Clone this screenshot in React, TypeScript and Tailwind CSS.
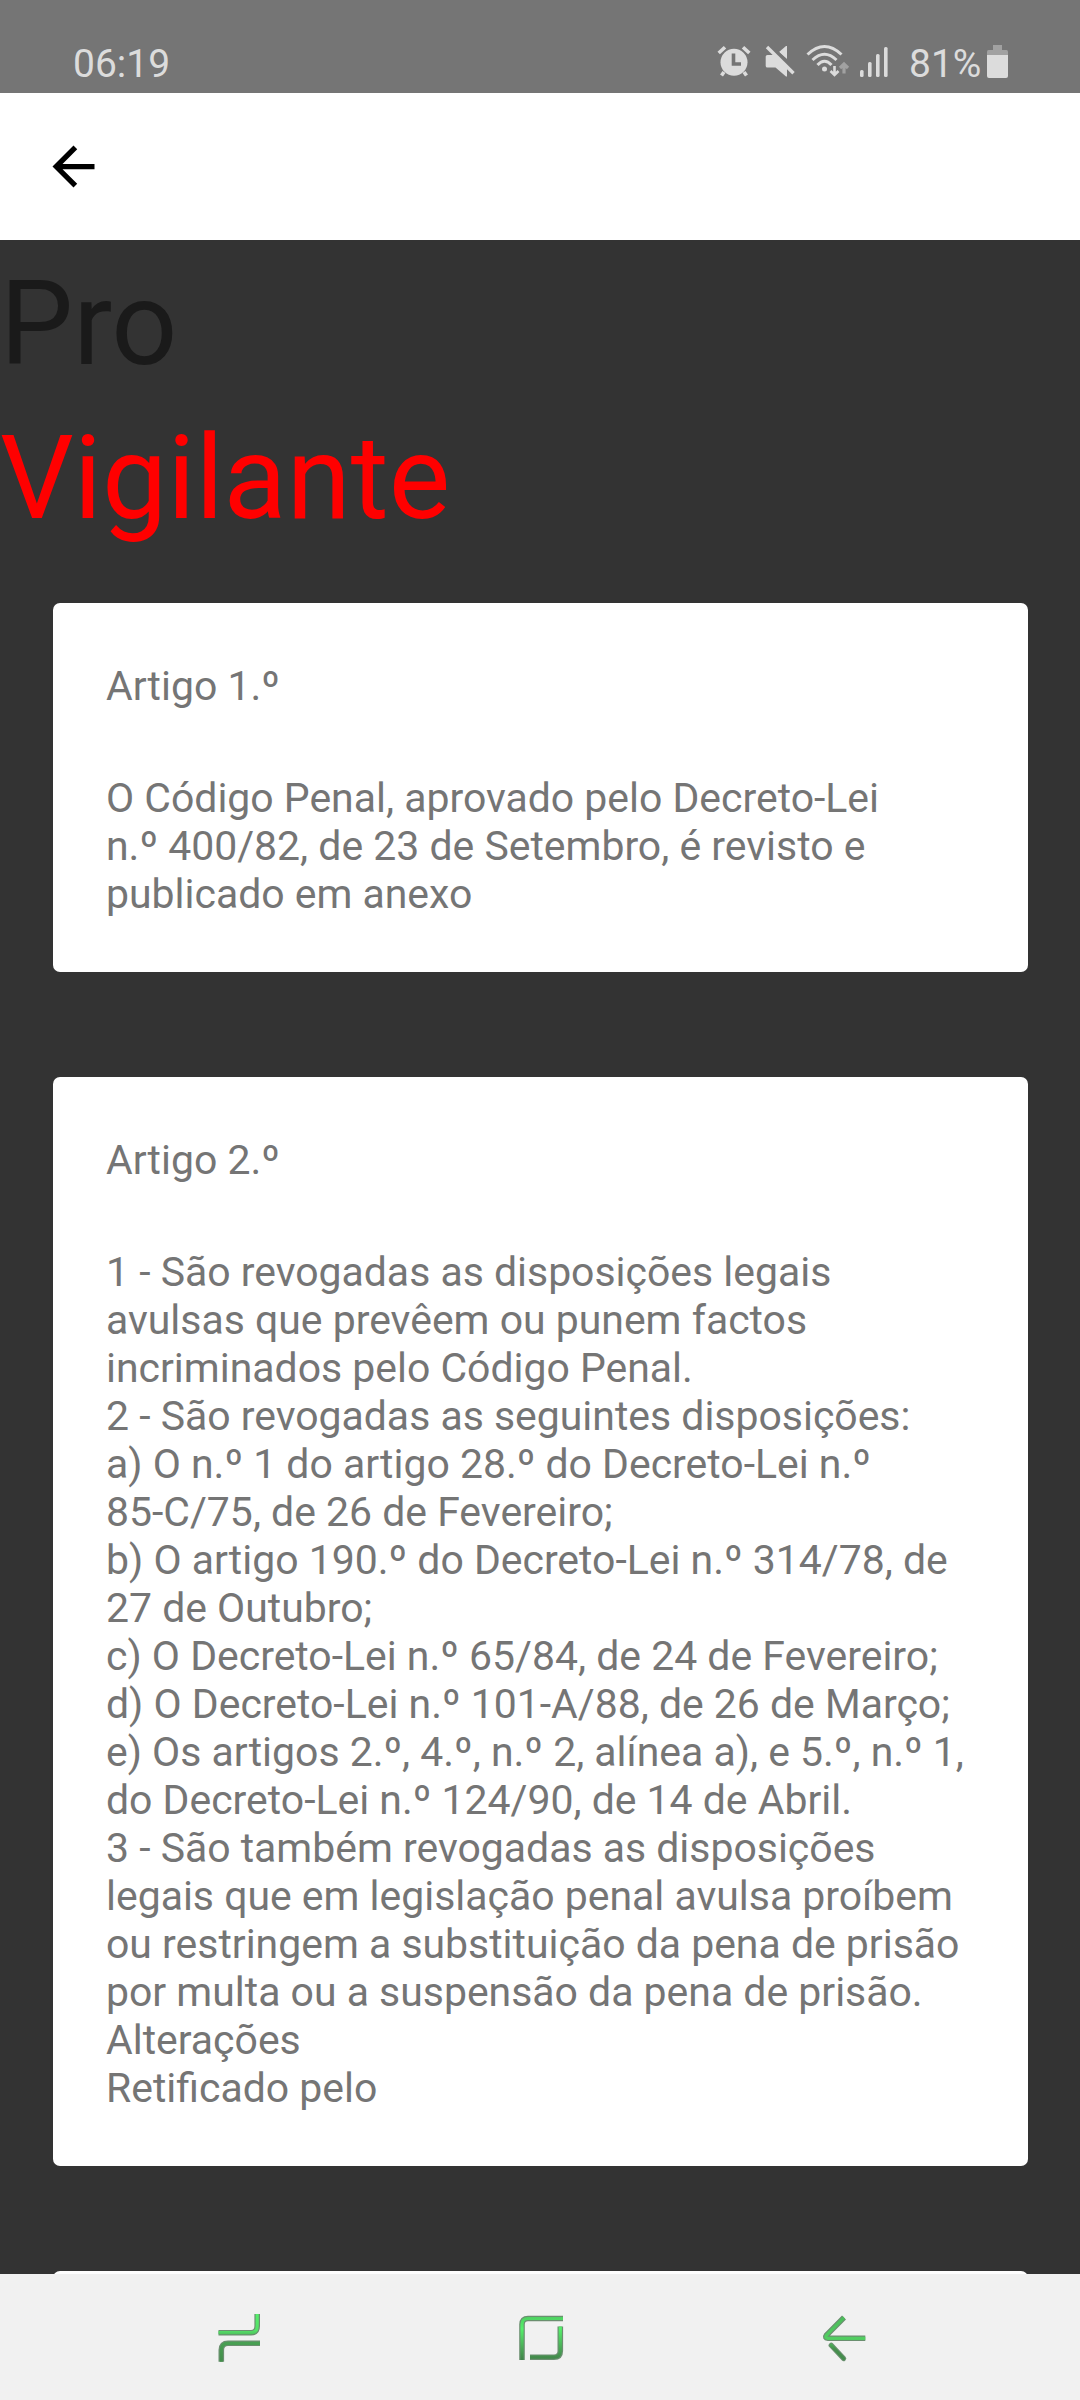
import React from "react";

const ARTICLES = [
  {
    title: "Artigo 1.º",
    lines: [
      "O Código Penal, aprovado pelo Decreto-Lei",
      "n.º 400/82, de 23 de Setembro, é revisto e",
      "publicado em anexo",
    ],
  },
  {
    title: "Artigo 2.º",
    lines: [
      "1 - São revogadas as disposições legais",
      "avulsas que prevêem ou punem factos",
      "incriminados pelo Código Penal.",
      "2 - São revogadas as seguintes disposições:",
      "a) O n.º 1 do artigo 28.º do Decreto-Lei n.º",
      "85-C/75, de 26 de Fevereiro;",
      "b) O artigo 190.º do Decreto-Lei n.º 314/78, de",
      "27 de Outubro;",
      "c) O Decreto-Lei n.º 65/84, de 24 de Fevereiro;",
      "d) O Decreto-Lei n.º 101-A/88, de 26 de Março;",
      "e) Os artigos 2.º, 4.º, n.º 2, alínea a), e 5.º, n.º 1,",
      "do Decreto-Lei n.º 124/90, de 14 de Abril.",
      "3 - São também revogadas as disposições",
      "legais que em legislação penal avulsa proíbem",
      "ou restringem a substituição da pena de prisão",
      "por multa ou a suspensão da pena de prisão.",
      "Alterações",
      "Retificado pelo",
    ],
  },
];

function StatusIcons() {
  return (
    <svg width="174" height="36" viewBox="0 0 174 36" fill="#dcdcdc">
      {/* alarm */}
      <g stroke="#dcdcdc" fill="none" strokeWidth="3.6">
        <path d="M1.7 9 L8 3.2 M26 3.2 L32.300 9" />
        <path d="M7 28 L4.500 31.500 M27 28 L29.500 31.500" />
      </g>
      <circle cx="17" cy="18.200" r="13.500" />
      <path d="M16.500 9.500 V20 H24" fill="none" stroke="#757575" strokeWidth="3.6" />
      {/* muted speaker */}
      <path d="M50.500 11 H58 L70 23 V32.500 H69 L58.500 23.500 H50.500 Q48.700 23.500 48.700 22 V12.500 Q48.700 11 50.500 11Z" />
      <path d="M62 8 L69 2 H70 V15Z" />
      <path d="M52 1 L78 27" fill="none" stroke="#757575" strokeWidth="4.5" />
      <path d="M50 3 L76.500 29.200" fill="none" stroke="#dcdcdc" strokeWidth="3.4" />
      {/* wifi */}
      <g fill="none" stroke="#dcdcdc" strokeWidth="3">
        <path d="M90.500 10.500 Q107.500 -5.500 124.500 10.500" />
        <path d="M95.500 16 Q107.500 4.500 119.500 16" />
        <path d="M100.500 21 Q107.500 13.500 114.500 21" />
        <path d="M117.500 22 V31.500 M113.500 27 L117.500 31 L121.500 27" strokeWidth="2.6" />
      </g>
      <circle cx="107.500" cy="25" r="2.500" />
      <path d="M127 29.500 V20 M123 24 L127 20 L131 24" fill="none" stroke="#a1a1a1" strokeWidth="3.2" />
      {/* signal */}
      <rect x="143" y="26" width="3.6" height="7" rx="1.5" />
      <rect x="151" y="18" width="3.6" height="15" rx="1.5" />
      <rect x="159" y="10" width="3.6" height="23" rx="1.5" />
      <rect x="167" y="3" width="3.6" height="30" rx="1.5" />
    </svg>
  );
}

function StatusBar() {
  return (
    <header className="flex h-[93px] items-start bg-[#757575] text-[#dcdcdc]">
      <span className="ml-[73px] mt-[41px] text-[39px] leading-[47px]">06:19</span>
      <div className="ml-auto mr-[72px] flex items-start">
        <div className="mt-[44px] mr-[18px]">
          <StatusIcons />
        </div>
        <span className="mt-[41px] w-[78px] whitespace-nowrap text-[39px] leading-[47px]">81%</span>
        <svg className="mt-[45px]" width="21" height="33" viewBox="0 0 21 33">
          <path d="M6 0 H15 V5 H19.500 Q21 5 21 7 V12 H0 V7 Q0 5 1.500 5 H6Z" fill="#a1a1a1" />
          <path d="M0 10 H21 V31 Q21 33 19 33 H2 Q0 33 0 31Z" fill="#dcdcdc" />
        </svg>
      </div>
    </header>
  );
}

function AppBar() {
  return (
    <div className="flex h-[147px] items-center bg-white pl-[42px]">
      <svg width="63" height="63" viewBox="0 0 24 24" fill="#000">
        <path d="M20 11H7.830l5.590-5.590L12 4l-8 8 8 8 1.410-1.410L7.830 13H20v-2z" />
      </svg>
    </div>
  );
}

function ArticleCard({ title, lines }: { title: string; lines: string[] }) {
  return (
    <article className="mb-[105px] rounded-[7px] bg-white px-[53px] pt-[59px] pb-[54px] text-[40.95px] leading-[48px] text-[#757575]">
      <h2>{title}</h2>
      <div className="mt-[64px]">
        {lines.map((line) => (
          <p key={line} className="whitespace-nowrap">
            {line}
          </p>
        ))}
      </div>
    </article>
  );
}

function Outlined({ d, id, round }: { d: string; id: string; round?: boolean }) {
  return (
    <g fill="none" strokeLinecap={round ? "round" : "butt"}>
      <path d={d} stroke="#6b8f70" strokeWidth={round ? 5.2 : 5.6} />
      <path d={d} stroke={"url(#" + id + ")"} strokeWidth="3.2" />
    </g>
  );
}

function Gradient({ id, stops, y1, y2 }: { id: string; stops: [string, string][]; y1: number; y2: number }) {
  return (
    <linearGradient id={id} gradientUnits="userSpaceOnUse" x1="0" x2="0" y1={y1} y2={y2}>
      {stops.map(([offset, color]) => (
        <stop key={offset} offset={offset} stopColor={color} />
      ))}
    </linearGradient>
  );
}

function NavBar() {
  return (
    <nav className="flex h-[126px] items-start bg-[#f1f1f1]">
      <svg className="ml-[218px] mt-[39px]" width="44" height="52" viewBox="0 0 44 52">
        <Gradient id="recents" y1={0} y2={50} stops={[["0", "#55f06b"], ["0.35", "#55e068"], ["0.5", "#4aa555"], ["1", "#438b4a"]]} />
        <Outlined id="recents" d="M0.500 19.700 H33 Q39.200 19.700 39.200 13 V1" />
        <Outlined id="recents" d="M42 30.300 H10 Q3.300 30.300 3.300 37 V48.700" />
      </svg>
      <svg className="ml-[257px] mt-[41px]" width="46" height="46" viewBox="0 0 46 46">
        <Gradient id="home" y1={0} y2={46} stops={[["0", "#4ecb60"], ["0.3", "#55f06b"], ["0.75", "#4aa555"], ["1", "#3f8047"]]} />
        <Outlined id="home" d="M44 3.500 H9 Q3 3.500 3 9.500 V45" />
        <Outlined id="home" d="M41.300 11.500 V36 Q41.300 42.200 35 42.200 H11" />
      </svg>
      <svg className="ml-[256px] mt-[40px]" width="46" height="50" viewBox="0 0 46 50">
        <Gradient id="back" y1={0} y2={50} stops={[["0", "#4cb85a"], ["0.5", "#52cf62"], ["0.7", "#468f4e"], ["1", "#438b4a"]]} />
        <Outlined id="back" d="M44.300 24.300 H7 Q3.400 24 5.600 21 L23 3.500" />
        <Outlined id="back" round d="M10.200 31.300 L22.600 44.500" />
      </svg>
    </nav>
  );
}

export default function App() {
  return (
    <div className="flex h-[2400px] w-[1080px] flex-col overflow-hidden bg-[#333333] font-['Roboto',sans-serif]">
      <StatusBar />
      <AppBar />
      <main className="min-h-0 flex-1 overflow-hidden">
        <h1 className="pt-[7px] text-[116px]">
          <span className="block leading-[154px] text-[#1a1a1a]">Pro</span>
          <span className="block leading-[155px] text-[#ff0000]">Vigilante</span>
        </h1>
        <div className="mt-[47px] ml-[53px] w-[975px]">
          {ARTICLES.map((article) => (
            <ArticleCard key={article.title} {...article} />
          ))}
          <div className="h-[100px] rounded-[7px] bg-white" />
        </div>
      </main>
      <NavBar />
    </div>
  );
}
